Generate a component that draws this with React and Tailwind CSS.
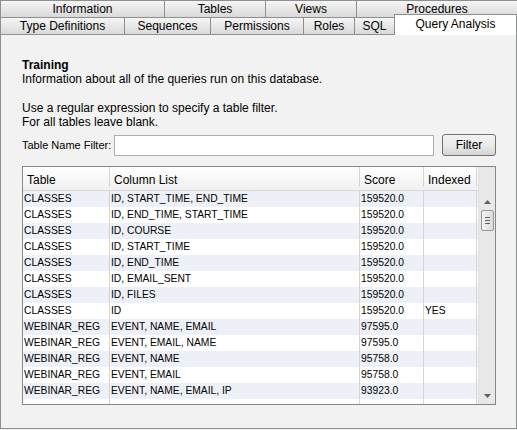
import React from 'react';

const topTabs = [
  { label: 'Information', w: 'w-[165px]' },
  { label: 'Tables', w: 'w-[102px]' },
  { label: 'Views', w: 'w-[92px]' },
  { label: 'Procedures', w: 'flex-1' },
];

const bottomTabs = [
  { label: 'Type Definitions', w: 'w-[125px]' },
  { label: 'Sequences', w: 'w-[87px]' },
  { label: 'Permissions', w: 'w-[94px]' },
  { label: 'Roles', w: 'w-[52px]' },
  { label: 'SQL', w: 'w-[41px]' },
];

const rows = [
  ['CLASSES', 'ID, START_TIME, END_TIME', '159520.0', ''],
  ['CLASSES', 'ID, END_TIME, START_TIME', '159520.0', ''],
  ['CLASSES', 'ID, COURSE', '159520.0', ''],
  ['CLASSES', 'ID, START_TIME', '159520.0', ''],
  ['CLASSES', 'ID, END_TIME', '159520.0', ''],
  ['CLASSES', 'ID, EMAIL_SENT', '159520.0', ''],
  ['CLASSES', 'ID, FILES', '159520.0', ''],
  ['CLASSES', 'ID', '159520.0', 'YES'],
  ['WEBINAR_REG', 'EVENT, NAME, EMAIL', '97595.0', ''],
  ['WEBINAR_REG', 'EVENT, EMAIL, NAME', '97595.0', ''],
  ['WEBINAR_REG', 'EVENT, NAME', '95758.0', ''],
  ['WEBINAR_REG', 'EVENT, EMAIL', '95758.0', ''],
  ['WEBINAR_REG', 'EVENT, NAME, EMAIL, IP', '93923.0', ''],
];

function Tab({ label, w }) {
  return (
    <div className={`${w} h-full flex items-center justify-center border-l border-t border-r border-[#8e8f8f] -mr-px bg-gradient-to-b from-[#f6f6f6] to-[#d9d9d9] text-[12px] leading-none`}>
      {label}
    </div>
  );
}

export default function App() {
  return (
    <div className="w-[517px] h-[430px] bg-[#f0f0f0] text-black overflow-hidden" style={{ fontFamily: '"Liberation Sans", Arial, sans-serif' }}>
      <div className="flex h-[17px]">
        {topTabs.map((t) => <Tab key={t.label} {...t} />)}
      </div>
      <div className="flex h-[17px] relative">
        {bottomTabs.map((t) => <Tab key={t.label} {...t} />)}
        <div className="relative flex-1 -mt-[3px] h-[21px] bg-white border-l border-t border-r border-[#8e8f8f] flex justify-center pt-[3px] text-[12px] leading-none z-10">
          Query Analysis
        </div>
      </div>
      <div className="h-[395px] border border-[#8e8f8f] bg-[#f2f2f2] px-[21px] pt-[23px] text-[12px] leading-[14px]">
        <div className="font-bold">Training</div>
        <div>Information about all of the queries run on this database.</div>
        <div className="h-[15px]" />
        <div>Use a regular expression to specify a table filter.</div>
        <div>For all tables leave blank.</div>
        <div className="flex items-center mt-[5px] h-[22px]">
          <span className="w-[92px] shrink-0 whitespace-nowrap text-[11px]">Table Name Filter:</span>
          <div className="w-[320px] shrink-0 h-[21px] bg-white border border-[#abadb3]" />
          <button className="ml-[8px] shrink-0 w-[54px] h-[22px] rounded-[3px] border border-[#707070] bg-gradient-to-b from-[#f2f2f2] via-[#ebebeb] to-[#d4d4d4] text-[12px]">
            Filter
          </button>
        </div>
        <div className="mt-[10px] w-[474px] h-[239px] border border-[#828790] bg-white flex">
          <div className="flex-1 flex flex-col overflow-hidden">
            <div className="flex h-[24px] shrink-0 bg-gradient-to-b from-white to-[#f0f0f0] border-b border-[#d5d5d5] items-end pb-[3px]">
              <div className="w-[87px] pl-[4px] border-r border-[#d5d5d5] h-full flex items-end">Table</div>
              <div className="w-[250px] pl-[4px] border-r border-[#d5d5d5] h-full flex items-end">Column List</div>
              <div className="w-[64px] pl-[4px] border-r border-[#d5d5d5] h-full flex items-end">Score</div>
              <div className="w-[53px] pl-[4px] border-r border-[#d5d5d5] h-full flex items-end">Indexed</div>
            </div>
            {rows.map((r, i) => (
              <div key={i} className={`flex h-[16px] shrink-0 items-center text-[10.3px] ${i % 2 === 0 ? 'bg-[#edf1f7]' : 'bg-white'}`}>
                <div className="w-[87px] pl-[1px] border-r border-[#d5d5d5] h-full flex items-center whitespace-nowrap">{r[0]}</div>
                <div className="w-[250px] pl-[1px] border-r border-[#d5d5d5] h-full flex items-center whitespace-nowrap">{r[1]}</div>
                <div className="w-[64px] pl-[1px] border-r border-[#d5d5d5] h-full flex items-center">{r[2]}</div>
                <div className="w-[53px] pl-[1px] border-r border-[#d5d5d5] h-full flex items-center">{r[3]}</div>
              </div>
            ))}
            <div className="flex flex-1">
              <div className="w-[87px] border-r border-[#d5d5d5]" />
              <div className="w-[250px] border-r border-[#d5d5d5]" />
              <div className="w-[64px] border-r border-[#d5d5d5]" />
              <div className="w-[53px] border-r border-[#d5d5d5]" />
            </div>
          </div>
          <div className="w-[17px] bg-[#e8e8e8] border-l border-[#e0e0e0] flex flex-col items-center pt-[33px]">
            <svg width="7" height="4" viewBox="0 0 7 4"><path d="M0 4 L3.5 0 L7 4 Z" fill="#606060" /></svg>
            <div className="mt-[6px] w-[13px] h-[21px] rounded-[2px] border border-[#979797] bg-gradient-to-r from-[#f3f3f3] to-[#dcdcdc] flex flex-col items-center justify-center gap-[2px]">
              <div className="w-[5px] h-px bg-[#606060]" />
              <div className="w-[5px] h-px bg-[#606060]" />
              <div className="w-[5px] h-px bg-[#606060]" />
            </div>
            <div className="flex-1" />
            <svg className="mb-[6px]" width="7" height="4" viewBox="0 0 7 4"><path d="M0 0 L7 0 L3.5 4 Z" fill="#606060" /></svg>
          </div>
        </div>
      </div>
    </div>
  );
}
